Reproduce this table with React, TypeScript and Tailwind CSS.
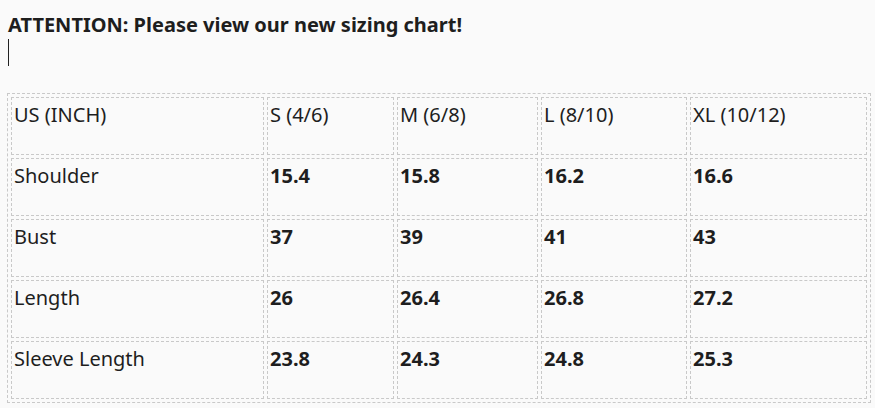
const rows: [string, string, string, string, string][] = [
  ["Shoulder", "15.4", "15.8", "16.2", "16.6"],
  ["Bust", "37", "39", "41", "43"],
  ["Length", "26", "26.4", "26.8", "27.2"],
  ["Sleeve Length", "23.8", "24.3", "24.8", "25.3"],
];

const head = ["US (INCH)", "S (4/6)", "M (6/8)", "L (8/10)", "XL (10/12)"];
const widths = ["w-[253px]", "w-[127px]", "w-[141px]", "w-[146px]", "w-[177px]"];

const cell = "h-[58px] border border-dashed border-[#c9c9c9] px-[2px] pt-[3px] align-top text-left leading-[27px]";

export default function App() {
  return (
    <div className="min-h-[408px] bg-[#fafafa] pl-[7px] pt-[11px] font-['Noto_Sans',sans-serif] text-[20px] text-[#1e1e1e]">
      <p className="pl-px font-bold leading-[27px]">ATTENTION: Please view our new sizing chart!</p>
      {/* caret on the empty line */}
      <div className="ml-px mt-px h-[27px] w-px bg-[#222]" />
      <table className="mt-[27px] w-[864px] table-fixed border-separate border-spacing-[3px] border border-dashed border-[#c9c9c9]">
        <tbody>
          <tr>
            {head.map((h, i) => (
              <td key={h} className={`${cell} ${widths[i]} font-normal`}>
                {h}
              </td>
            ))}
          </tr>
          {rows.map((r) => (
            <tr key={r[0]}>
              {r.map((v, i) => (
                <td key={i} className={`${cell} ${i === 0 ? "font-normal" : "font-bold"}`}>
                  {v}
                </td>
              ))}
            </tr>
          ))}
        </tbody>
      </table>
    </div>
  );
}
